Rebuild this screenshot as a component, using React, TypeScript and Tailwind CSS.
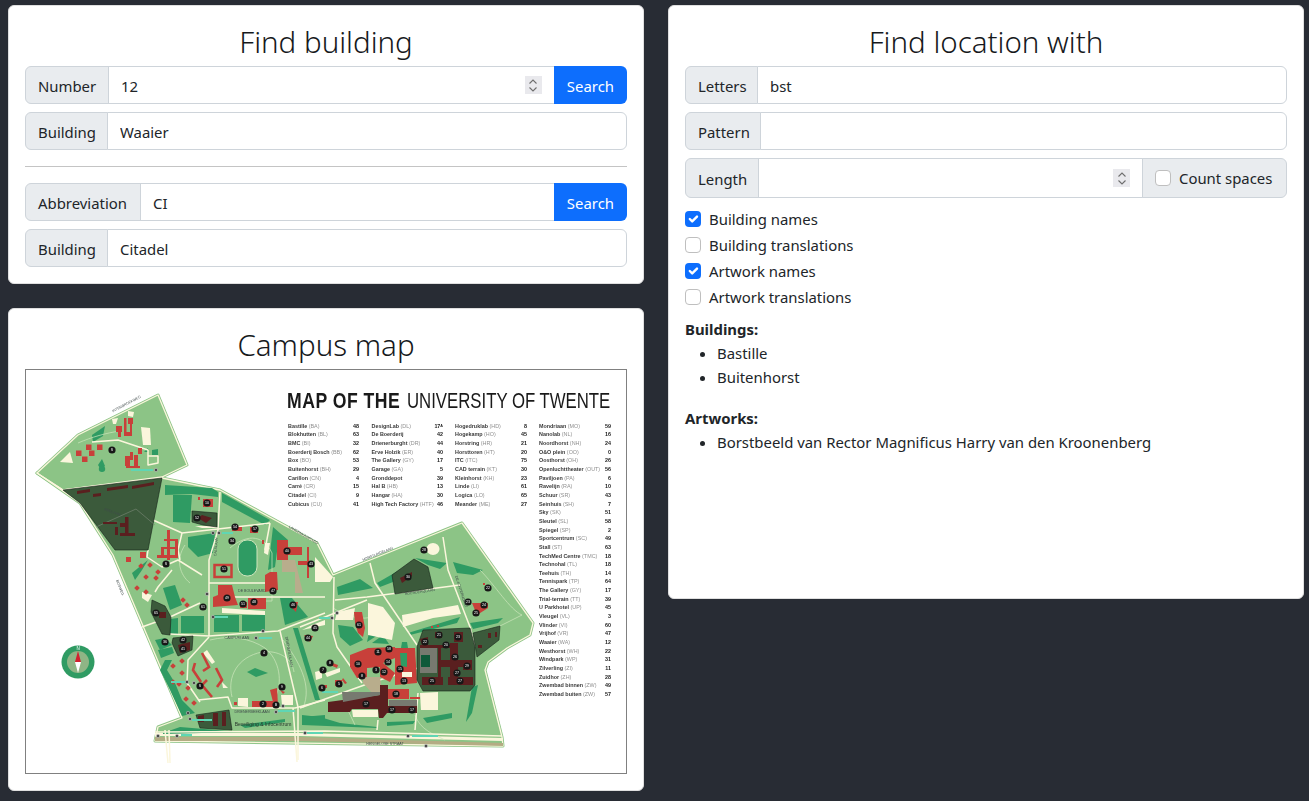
import React from "react";

/* ---------------- LEGEND DATA ---------------- */

type Entry = [string, string, string];

const LEGEND: { x: number; right: number; rows: Entry[] }[] = [
  {
    x: 288,
    right: 359,
    rows: [
      ["Bastille", "(BA)", "48"],
      ["Blokhutten", "(BL)", "63"],
      ["BMC", "(BI)", "32"],
      ["Boerderij Bosch", "(BB)", "62"],
      ["Box", "(BO)", "53"],
      ["Buitenhorst", "(BH)", "29"],
      ["Carillon", "(CN)", "4"],
      ["Carré", "(CR)", "15"],
      ["Citadel", "(CI)", "9"],
      ["Cubicus", "(CU)", "41"],
    ],
  },
  {
    x: 371.5,
    right: 443,
    rows: [
      ["DesignLab", "(DL)", "17ᴬ"],
      ["De Boerderij", "", "42"],
      ["Drienerburght", "(DR)", "44"],
      ["Erve Holzik", "(ER)", "40"],
      ["The Gallery", "(GY)", "17"],
      ["Garage", "(GA)", "5"],
      ["Gronddepot", "", "39"],
      ["Hal B", "(HB)", "13"],
      ["Hangar", "(HA)", "30"],
      ["High Tech Factory", "(HTF)", "46"],
    ],
  },
  {
    x: 455,
    right: 527,
    rows: [
      ["Hogedruklab", "(HD)", "8"],
      ["Hogekamp", "(HO)", "45"],
      ["Horstring", "(HR)", "21"],
      ["Horsttoren", "(HT)", "20"],
      ["ITC", "(ITC)", "75"],
      ["CAD terrain", "(KT)", "30"],
      ["Kleinhorst", "(KH)", "23"],
      ["Linde", "(LI)", "61"],
      ["Logica", "(LO)", "65"],
      ["Meander", "(ME)", "27"],
    ],
  },
  {
    x: 539,
    right: 611,
    rows: [
      ["Mondriaan", "(MO)", "59"],
      ["Nanolab", "(NL)", "16"],
      ["Noordhorst", "(NH)", "24"],
      ["O&O plein", "(OO)", "0"],
      ["Oosthorst", "(OH)", "26"],
      ["Openluchttheater", "(OUT)", "56"],
      ["Paviljoen", "(PA)", "6"],
      ["Ravelijn", "(RA)", "10"],
      ["Schuur", "(SR)", "43"],
      ["Seinhuis", "(SH)", "7"],
      ["Sky", "(SK)", "51"],
      ["Sleutel", "(SL)", "58"],
      ["Spiegel", "(SP)", "2"],
      ["Sportcentrum", "(SC)", "49"],
      ["Stall", "(ST)", "63"],
      ["TechMed Centre", "(TMC)", "18"],
      ["Technohal", "(TL)", "18"],
      ["Teehuis", "(TH)", "14"],
      ["Tennispark", "(TP)", "64"],
      ["The Gallery", "(GY)", "17"],
      ["Trial-terrain", "(TT)", "39"],
      ["U Parkhotel", "(UP)", "45"],
      ["Vleugel", "(VL)", "3"],
      ["Vlinder", "(VI)", "60"],
      ["Vrijhof", "(VR)", "47"],
      ["Waaier", "(WA)", "12"],
      ["Westhorst", "(WH)", "22"],
      ["Windpark", "(WP)", "31"],
      ["Zilverling", "(ZI)", "11"],
      ["Zuidhor", "(ZH)", "28"],
      ["Zwembad binnen", "(ZW)", "49"],
      ["Zwembad buiten", "(ZW)", "57"],
    ],
  },
];

/* ---------------- MAP SHAPES (page coordinates) ---------------- */

const GROUND = [
  "158,395 187,465 162,477 63,490 37,473 78,435",
  "37,473 63,490 162,478 220,490 317,543 333,575 462,523 533,623 530,635 507,648 488,662 485,670 502,737 503,746 155,741 158,727 182,718 113,555 80,503",
];

const DARK_GREEN = [
  "92,435 105,426 103,436 93,442",
  "102,459 105,466 101,470 98,465",
  "152,450 158,449 158,455 152,455",
  "144,452 148,448 148,452",
  "165,485 212,488 218,492 218,497 192,494 165,495",
  "173,495 192,495 190,523 173,522",
  "222,493 270,520 265,525 222,502",
  "188,537 215,533 213,553 198,557 188,547",
  "273,527 288,540 278,544 275,567 268,570",
  "163,588 175,585 182,605 170,610",
  "181,616 204,616 204,633 181,633",
  "214,615 239,615 239,632 214,632",
  "242,615 265,615 265,631 242,631",
  "170,619 178,618 178,634 170,634",
  "155,640 165,638 172,645 160,650",
  "158,650 172,647 174,653 161,658",
  "172,660 167,670 175,683 182,700 195,713 182,716 170,690 160,670 165,660",
  "132,573 148,560 142,570 135,580",
  "280,598 292,598 308,617 285,625",
  "293,628 298,628 320,700 315,700",
  "255,668 268,673 256,677 247,672",
  "337,587 360,579 373,588 338,595",
  "377,583 403,568 393,582 380,587",
  "415,558 447,563 440,569 428,565",
  "453,562 483,570 473,575 457,573",
  "470,623 503,618 498,623 473,629",
  "338,625 353,627 363,640 350,646 340,637",
  "370,628 378,635 367,642",
  "372,643 383,635 389,644",
  "402,642 407,642 408,648 401,648",
  "408,633 460,617 457,623 410,635",
  "302,715 320,717 340,723 377,727 377,728 302,725",
  "387,722 415,721 413,724 387,726",
  "423,718 452,713 452,718 427,723",
  "472,687 478,685 472,713 466,722",
  "302,717 325,715 325,724 302,724",
  "240,725 285,719 285,722 245,728",
  "163,733 180,727 240,732 163,734",
];

const CREAM = [
  "141,427 150,428 151,445 143,445",
  "60,462 70,452 73,463",
  "112,419 118,418 116,424 113,424",
  "128,411 134,412 133,417 128,416",
  "315,557 333,577 330,582 315,582",
  "368,603 383,607 395,623 392,640 368,635",
  "402,615 458,605 461,614 433,618 403,627",
  "337,612 355,608 353,620 335,620",
  "420,693 438,692 438,710 421,710",
  "352,710 378,710 378,717 353,717",
  "315,672 322,670 322,678 316,680",
  "325,673 340,668 340,672 327,677",
  "312,625 325,620 325,625 302,630",
  "238,698 248,698 248,707 238,706",
  "281,695 293,695 293,705 282,705",
  "222,608 265,611 265,615 222,613",
  "207,650 215,662 212,664 203,653",
  "142,592 152,595 148,602 142,598",
  "222,682 228,688 223,688",
  "265,543 270,543 268,555 264,553",
  "195,526 217,526 217,528 202,528",
];

const RED = [
  "124,418 126.5,418 126.5,436 124,436",
  "116,426 122,426 122,432 116,432",
  "118,432 121,432 121,437 118,437",
  "128,418 133,418 133,424 128,424",
  "130,424 132,424 132,432 130,432",
  "124,432 132,432 132,436 124,436",
  "86,444.5 91.5,444.5 91.5,450 86,450",
  "97,444.5 102.5,444.5 102.5,450 97,450",
  "76,450.5 81.5,450.5 81.5,456 76,456",
  "89,450.5 94.5,450.5 94.5,456 89,456",
  "82,456.5 87.5,456.5 87.5,462 82,462",
  "138,448 142,448 142,454 138,454",
  "125,456 130,456 130,466 125,466",
  "130,452 133,452 133,460 130,460",
  "134,455 138,455 138,466 134,466",
  "126,466 140,466 140,468 126,468",
  "167,530 170,530 170,560 167,560",
  "175,540 178,540 178,558 175,558",
  "161,547 164,547 164,558 161,558",
  "164,539 178,539 178,541 164,541",
  "164,547 178,547 178,549 164,549",
  "157,555 178,555 178,558 157,558",
  "140,552 146,552 146,558 140,558",
  "126,557 131,557 131,562 126,562",
  "198,497 200,497 200,500 198,500",
  "203,499 213,499 213,507 203,507",
  "232,527 242,527 242,531 232,531",
  "250,527 258,527 258,533 250,533",
  "262,540 264,540 264,544 262,544",
  "277,540 288,540 288,547 302,547 302,555 288,555 288,560 277,560",
  "270,572 277,572 278,590 265,592 265,575",
  "218,585 232,585 235,597 238,605 213,607 213,597 218,595",
  "240,602 247,602 247,608 240,608",
  "248,598 266,598 266,609 248,609",
  "292,602 298,602 296,612 292,608",
  "307,547 309,547 309,578 307,578",
  "298,561 312,561 312,565 298,565",
  "270,690 277,688 278,705 273,702",
  "252,701 273,701 273,707 252,707",
  "280,690 285,692 283,694",
  "234,702 237,702 237,705 234,705",
  "354,612 362,612 365,628 363,637 358,633 355,623",
  "304,635 313,636 310,642",
  "330,662 338,665 337,668 330,665",
  "335,680 342,680 342,687 335,686",
  "343,678 347,683 345,684 342,680",
  "320,685 327,685 327,688 320,688",
  "472,603 488,603 488,608 477,615",
  "483,583 485,583 485,585 483,585",
  "350,655 363,650 368,648 395,647 395,658 383,663 395,673 390,682 380,677 380,667 367,668 367,677 357,678 350,667",
  "395,648 415,648 417,683 395,685",
  "385,689 409,689 409,699 387,699",
  "410,697 420,697 420,699 410,699",
  "431,626 433,626 433,628 431,628",
  "437,625 439,625 439,627 437,627",
];

const SQUARES: [number, number][] = [
  [182, 661], [173, 666], [182, 673], [173, 682], [179, 684], [188, 688], [186, 699], [194, 703],
  [141, 566], [150, 565], [158, 572], [146, 577], [156, 578], [137, 588], [146, 592], [183, 600], [187, 605],
];

const DORMS = [
  "202,653 209,667 203,671",
  "195,663 193,670 201,682",
  "216,668 222,680 217,687",
  "207,680 202,685 212,697",
];

const DARK = [
  "63,490 162,478 148,550 115,550 80,503",
  "192,511 217,513 217,527 203,525 192,522",
  "152,600 165,606 171,617 170,635 162,634 151,612",
  "173,638 193,636 192,650 178,656 172,643",
  "196,715 229,710 232,730 200,728",
  "392,575 414,559 428,567 433,588 395,594",
  "417,647 423,630 470,628 475,647 475,685 470,691 423,691 417,680",
  "473,633 500,626 499,640 477,657",
];

const MAROON = [
  "77,491 90,489 90,492 77,494",
  "93,494 101,493 101,496 93,497",
  "107,488 128,485 128,488 107,491",
  "132,486 154,482 154,485 132,489",
  "103,522 117,522 117,524 103,524",
  "115,527 118,527 118,535 115,535",
  "125,517 128.5,517 128.5,533 125,533",
  "120,533 135,533 135,536 120,536",
  "120,523 127,523 127,527 120,527",
  "159,612 166,612 166,618 159,618",
  "202,515 212,518 206,523 198,518",
  "178,645 190,642 190,650 180,653",
  "198,716 204,715 204,722 198,722",
  "213,713 218,713 218,726 213,726",
  "222,712 226,712 226,726 222,726",
  "400,578 412,572 412,576 402,583",
  "420,639 428,637 428,645 422,645",
  "435,632 442,632 442,638 435,638",
  "454,632 463,632 463,642 454,642",
  "420,645 457,645 457,648 420,648",
  "450,643 458,643 458,678 450,678",
  "440,660 472,660 472,667 440,667",
  "463,660 472,660 472,670 463,670",
  "422,677 443,677 443,685 422,685",
  "448,677 473,677 473,685 448,685",
  "438,648 441,648 441,677 438,677",
  "478,645 482,645 482,648 478,648",
  "488,633 491,633 491,638 488,638",
  "495,632 497,632 497,637 495,637",
  "328,702 380,695 380,685 388,685 388,706 417,706 417,713 387,713 383,718 379,718 378,709 352,709 350,712 328,712",
];

const ROADS = [
  "153,520 182,533 218,529 270,523",
  "220,492 218,530 209,560 209,636",
  "182,533 178,550 180,560",
  "148,550 147,557 162,567 178,560 202,575",
  "172,570 158,587 155,592",
  "142,627 170,617 200,603",
  "170,634 209,636 278,631 325,613",
  "300,627 335,613 367,600",
  "335,600 367,597 460,585",
  "209,583 265,583",
  "215,597 325,597",
  "198,700 228,697 232,708 295,708 325,700",
  "300,708 370,683 418,668",
  "209,637 188,660 187,683 200,702",
  "280,631 298,707 298,760",
  "293,708 297,762",
  "165,730 168,763",
  "169,730 170,763",
  "155,732 325,731 502,736",
  "334,577 333,633 337,647 362,683",
  "370,563 375,583 417,645",
  "443,537 448,570 470,627 475,647",
  "378,720 377,730",
  "418,693 415,730",
  "270,523 265,550",
  "92,442 118,440 148,450",
  "148,450 148,465 158,463 158,456 148,456",
];

const PATHS = [
  "M210 640c20-5 40-2 55 8 15 12 18 35 10 50",
  "M232 697c-5-20 5-40 30-45 15-2 30 5 32 20",
  "M283 640c15 20 30 45 20 68",
  "M78 443c14-6 28-10 42-12",
  "M230 548c14-12 32-16 42 5v48h-15",
  "M415 715c5 15 20 20 30 25",
  "M333 608c20 12 40 15 50 0",
  "M480 570c15 15 30 40 42 45l-30 15",
  "M185 545c-10 15-5 30 5 38",
  "M343 700l12 25",
];

// track, tan plaza and gray hall blocks sit between the buildings
const TAN = [
  "363,677 380,677 382,692 372,693 363,683",
  "282,560 295,560 295,572 282,572",
  "295,560 303,593 295,593",
  "412,572 420,575 415,580",
];

const GRAY = [
  "342,692 380,692 380,695 343,702",
  "389,700 417,700 417,706 389,706",
  "420,648 437,648 437,673 420,673",
];

const TEAL: [number, number, number][] = [
  [131, 469, 22], [222, 532, 11], [215, 616, 13], [259, 637, 13], [171, 681, 14], [278, 710, 17],
  [181, 734, 11], [307, 732, 16], [412, 735, 26], [319, 617, 11], [322, 691, 16], [192, 719, 20],
];

const STOPS: [number, number][] = [
  [337, 613], [332, 618], [339, 683], [305, 733], [408, 736], [426, 746], [158, 736], [177, 736],
  [188, 713], [190, 719], [187, 682], [194, 683], [276, 712], [283, 706], [256, 638], [263, 631],
  [213, 617], [213, 533], [219, 533], [207, 594], [156, 470],
];

const MARKERS: [number, number, string][] = [
  [112, 450, "S"], [207, 503, "10"], [197, 518, "52"], [235, 527, "54"], [255, 529, "57"], [232, 541, "34"], [287, 551, "40"], [311, 564, "43"],
  [166, 564, "S"], [224, 569, "51"], [273, 591, "47"], [227, 598, "49"], [243, 604, "51"], [254, 602, "48"], [293, 605, "46"], [203, 607, "61"],
  [156, 613, "65"], [165, 642, "36"], [183, 640, "42"], [183, 649, "41"], [264, 653, "4"], [282, 687, "9"], [200, 686, "S"], [263, 704, "2"],
  [276, 705, "B"], [315, 628, "45"], [308, 638, "44"], [323, 670, "7"], [322, 688, "6"], [424, 550, "28"], [408, 577, "30"], [488, 588, "22"],
  [468, 602, "23"], [484, 605, "24"], [476, 613, "25"], [439, 635, "21"], [425, 642, "22"], [458, 637, "23"], [446, 645, "20"], [455, 657, "26"],
  [467, 666, "29"], [457, 673, "27"], [432, 681, "25"], [460, 681, "27"], [359, 625, "61"], [330, 663, "8"], [339, 684, "5"], [378, 652, "11"],
  [389, 649, "58"], [388, 662, "14"], [358, 664, "10"], [400, 669, "15"], [384, 672, "12"], [376, 670, "3"], [362, 676, "8"], [404, 681, "13"],
  [396, 694, "18"], [366, 704, "17"], [392, 710, "17"], [412, 710, "17"],
];

const ROAD_LABELS: [string, number, number, number][] = [
  ["INTERBROEKWEG", 127, 405, -28],
  ["LANGENKAMPWEG", 303, 536, 30],
  ["HORSTLINDELAAN", 378, 555, -22],
  ["BOERDERIJLAAN", 420, 593, -8],
  ["REELAAN", 112, 513, 20],
  ["BOSWEG", 119, 588, 68],
  ["CALSLAAN", 217, 547, -85],
  ["DE BOULEVARD", 252, 592, 0],
  ["CAMPUSLAAN", 237, 639, 0],
  ["DRIENERLOLAAN", 288, 652, 80],
  ["DE ACHTERHORST", 460, 592, 72],
  ["DRIENERBEEKLAAN", 252, 713, 0],
  ["HENGELOSE STRAAT", 385, 745, 0],
];

const CampusMap: React.FC = () => {
  return (
    <svg viewBox="26 370 600 403" className="block h-[403px] w-[600px] blur-[0.3px]" fontFamily="'Liberation Sans', sans-serif">
      <rect x="26" y="370" width="600" height="403" fill="#ffffff" />

      {/* Terrein */}
      {GROUND.map((p) => (
        <polygon key={p} points={p} fill="#8cc486" stroke="#8cc486" strokeWidth="3" strokeLinejoin="round" />
      ))}
      {GROUND.map((p) => (
        <polygon key={`e${p}`} points={p} fill="none" stroke="#fbf6dc" strokeWidth="1.3" strokeLinejoin="round" />
      ))}
      <polygon points="155,737 300,737 503,743 503,746 300,741 155,741" fill="#b4ac84" />
      <polygon points="155,733 300,733 503,738 503,741 300,736 155,736" fill="#fbf6dc" />
      {DARK_GREEN.map((p) => (
        <polygon key={p} points={p} fill="#2f9b63" />
      ))}
      {PATHS.map((d) => (
        <path key={d} d={d} fill="none" stroke="#cfe6bd" strokeWidth="0.7" />
      ))}
      {ROADS.map((p) => (
        <polyline key={p} points={p} fill="none" stroke="#fbf6dc" strokeWidth="1.5" strokeLinejoin="round" />
      ))}
      {CREAM.map((p) => (
        <polygon key={p} points={p} fill="#fbf6dc" />
      ))}
      <rect x="238" y="540" width="19" height="36" rx="9" fill="#2f9b63" stroke="#cfe6bd" strokeWidth="1" />
      {TAN.map((p) => (
        <polygon key={p} points={p} fill="#b8ad8c" />
      ))}
      {RED.map((p) => (
        <polygon key={p} points={p} fill="#c8403a" />
      ))}
      <rect x="214.5" y="565" width="17" height="12" fill="none" stroke="#c8403a" strokeWidth="2.5" />
      <polygon points="400,653 407,653 407,667 401,666" fill="#2f9b63" />
      <polygon points="402,672 412,672 412,677 402,677" fill="#fbf6dc" />
      {SQUARES.map(([x, y]) => (
        <rect key={`${x}-${y}`} x={x - 2} y={y - 2} width="4" height="4" transform={`rotate(45 ${x} ${y})`} fill="#c8403a" />
      ))}
      {DORMS.map((p) => (
        <polyline key={p} points={p} fill="none" stroke="#c8403a" strokeWidth="2.6" />
      ))}
      {DARK.map((p) => (
        <polygon key={p} points={p} fill="#3b5a3b" stroke="#16241a" strokeWidth="0.6" />
      ))}
      <polyline points="96,527 136,509 155,525" fill="none" stroke="#7c8a78" strokeWidth="0.6" />
      {MAROON.map((p) => (
        <polygon key={p} points={p} fill="#5a1f1f" />
      ))}
      {GRAY.map((p) => (
        <polygon key={p} points={p} fill="#777a70" />
      ))}
      <polygon points="421,655 430,655 430,667 421,667" fill="#0f5a3a" />
      <ellipse cx="433" cy="549" rx="6.5" ry="6" fill="#fbf6dc" />
      <ellipse cx="102" cy="469" rx="3.2" ry="3" fill="#2f9b63" />

      {/* Haltes */}
      {TEAL.map(([x, y, w]) => (
        <rect key={`${x}-${y}`} x={x} y={y} width={w} height="2" fill="#5fd6b4" />
      ))}
      {STOPS.map(([x, y]) => (
        <circle key={`${x}-${y}`} cx={x} cy={y} r="1.7" fill="#4a4a4a" stroke="#d8d8d8" strokeWidth="0.5" />
      ))}

      {/* Nummers */}
      {MARKERS.map(([x, y, n]) => (
        <g key={`${x}-${y}`}>
          <circle cx={x} cy={y} r="3.6" fill="#171717" />
          <text x={x} y={y + 1.3} textAnchor="middle" fontSize="3.6" fill="#ffffff">
            {n}
          </text>
        </g>
      ))}

      {/* Straatnamen */}
      {ROAD_LABELS.map(([t, x, y, r]) => (
        <text key={t} x={x} y={y} transform={`rotate(${r} ${x} ${y})`} textAnchor="middle" fontSize="3.6" fill="#3f4a4a">
          {t}
        </text>
      ))}
      <text x="263" y="726" textAnchor="middle" fontSize="5" fill="#26332b">
        Beveiliging &amp; Infocentrum
      </text>

      {/* Kompas */}
      <circle cx="78" cy="662" r="16.5" fill="#2f9b63" />
      <circle cx="78" cy="662" r="11" fill="#8fb585" />
      <polygon points="78,651 81,662 75,662" fill="#d3202f" />
      <polygon points="78,673 81,662 75,662" fill="#ffffff" />
      <text x="78" y="650" textAnchor="middle" fontSize="4.5" fill="#ffffff">
        N
      </text>

      {/* Titel */}
      <text transform="translate(287 407.5) scale(0.82 1)" fontSize="21.5" fontWeight="700" fill="#1a1a1a" letterSpacing="0.6">
        MAP OF THE
      </text>
      <text transform="translate(407 407.5) scale(0.78 1)" fontSize="21.5" fill="#1a1a1a">
        UNIVERSITY OF TWENTE
      </text>

      {/* Legenda */}
      {LEGEND.map((col) =>
        col.rows.map(([name, code, nr], i) => (
          <g key={`${col.x}-${i}`} fontSize="5.4">
            <text x={col.x} y={427.6 + i * 8.66} fill="#3a3a3a" fontWeight="700">
              {name}
              <tspan fill="#8f8f8f" fontWeight="400" dx="1.5">
                {code}
              </tspan>
            </text>
            <text x={col.right} y={427.6 + i * 8.66} textAnchor="end" fill="#222222" fontWeight="700">
              {nr}
            </text>
          </g>
        ))
      )}
    </svg>
  );
};

/* ---------------- FORM PARTS ---------------- */

const Card: React.FC<{ title: string; className?: string; children: React.ReactNode }> = ({ title, className, children }) => {
  return (
    <section className={`rounded-[6px] border border-[#dfdfdf] bg-white px-4 pt-4 ${className ?? ""}`}>
      <h2 className="mb-1 text-center text-[29.5px] leading-[40px] font-light text-[#16191c]">{title}</h2>
      {children}
    </section>
  );
};

const Spinner: React.FC = () => (
  <span className="flex h-[18px] w-[17px] shrink-0 flex-col items-center justify-center gap-[3px] bg-[#e9e9ed]">
    <svg viewBox="0 0 10 5" className="h-[5px] w-[10px]">
      <path d="M1.5 4.5L5 1l3.5 3.5" fill="none" stroke="#6e6e6e" strokeWidth="1.1" />
    </svg>
    <svg viewBox="0 0 10 5" className="h-[5px] w-[10px]">
      <path d="M1.5.5L5 4l3.5-3.5" fill="none" stroke="#6e6e6e" strokeWidth="1.1" />
    </svg>
  </span>
);

const Field: React.FC<{
  label: string;
  labelWidth: string;
  value?: string;
  spinner?: boolean;
  button?: boolean;
  tall?: boolean;
  children?: React.ReactNode;
}> = ({ label, labelWidth, value = "", spinner, button, tall, children }) => {
  const square = button || children;
  return (
    <div className={`flex text-[#212529] ${tall ? "h-10" : "h-[38px]"}`}>
      <span className={`flex shrink-0 items-center rounded-l-[6px] border border-[#ced4da] bg-[#e9ecef] pl-3 whitespace-nowrap ${tall ? "pt-[3px]" : "pt-[2px]"} ${labelWidth}`}>
        {label}
      </span>
      <div className={`-ml-px flex min-w-0 flex-1 items-center border border-[#ced4da] bg-white pr-3 pl-3 ${square ? "" : "rounded-r-[6px]"}`}>
        <input readOnly value={value} className="min-w-0 flex-1 pt-[2px] text-[#212529] outline-none" />
        {spinner && <Spinner />}
      </div>
      {button && <span className="-ml-px flex items-center rounded-r-[6px] bg-[#0d6efd] px-[13px] pt-[2px] text-white">Search</span>}
      {children}
    </div>
  );
};

const Check: React.FC<{ on?: boolean }> = ({ on }) =>
  on ? (
    <span className="block h-4 w-4 shrink-0 rounded-[4px] bg-[#0d6efd]">
      <svg viewBox="0 0 20 20" className="h-4 w-4">
        <path d="M6 10l3 3l6-6" fill="none" stroke="#ffffff" strokeWidth="3" strokeLinecap="round" strokeLinejoin="round" />
      </svg>
    </span>
  ) : (
    <span className="block h-4 w-4 shrink-0 rounded-[4px] border border-[#bfbfbf] bg-white" />
  );

const CheckRow: React.FC<{ label: string; on?: boolean }> = ({ label, on }) => (
  <div className="flex h-[26px] items-center gap-2 text-[#212529]">
    <Check on={on} />
    <span>{label}</span>
  </div>
);

/* ---------------- PAGE ---------------- */

const App: React.FC = () => {
  return (
    <div className="grid h-[801px] grid-cols-2 items-start gap-6 overflow-hidden bg-[#282c34] pt-[5px] pr-[5px] pl-2 font-['Noto_Sans',sans-serif] text-[14.9px]">
      <div className="flex flex-col gap-6">
        <Card title="Find building" className="h-[279px]">
          <div className="flex flex-col gap-2">
            <Field label="Number" labelWidth="w-[84px]" value="12" spinner button />
            <Field label="Building" labelWidth="w-[83px]" value="Waaier" />
          </div>
          <hr className="my-4 border-[#c4c4c4]" />
          <div className="flex flex-col gap-2">
            <Field label="Abbreviation" labelWidth="w-[116px]" value="CI" button />
            <Field label="Building" labelWidth="w-[83px]" value="Citadel" />
          </div>
        </Card>
        <Card title="Campus map" className="h-[483px]">
          <div className="border border-[#808080]">
            <CampusMap />
          </div>
        </Card>
      </div>

      <Card title="Find location with" className="h-[594px]">
        <div className="flex flex-col gap-2">
          <Field label="Letters" labelWidth="w-[73px]" value="bst" />
          <Field label="Pattern" labelWidth="w-[76px]" />
          <Field label="Length" labelWidth="w-[74px]" spinner tall>
            <span className="-ml-px flex w-[145px] shrink-0 items-center gap-2 rounded-r-[6px] border border-[#ced4da] bg-[#e9ecef] pl-3 text-[#212529]">
              <Check />
              Count spaces
            </span>
          </Field>
        </div>
        <div className="mt-2">
          <CheckRow label="Building names" on />
          <CheckRow label="Building translations" />
          <CheckRow label="Artwork names" on />
          <CheckRow label="Artwork translations" />
        </div>
        <div className="mt-[7px] leading-6 text-[#212529]">
          <div className="font-bold">Buildings:</div>
          <ul className="mb-[17px] list-disc pl-8">
            <li>Bastille</li>
            <li>Buitenhorst</li>
          </ul>
          <div className="font-bold">Artworks:</div>
          <ul className="list-disc pl-8">
            <li>Borstbeeld van Rector Magnificus Harry van den Kroonenberg</li>
          </ul>
        </div>
      </Card>
    </div>
  );
};

export default App;
